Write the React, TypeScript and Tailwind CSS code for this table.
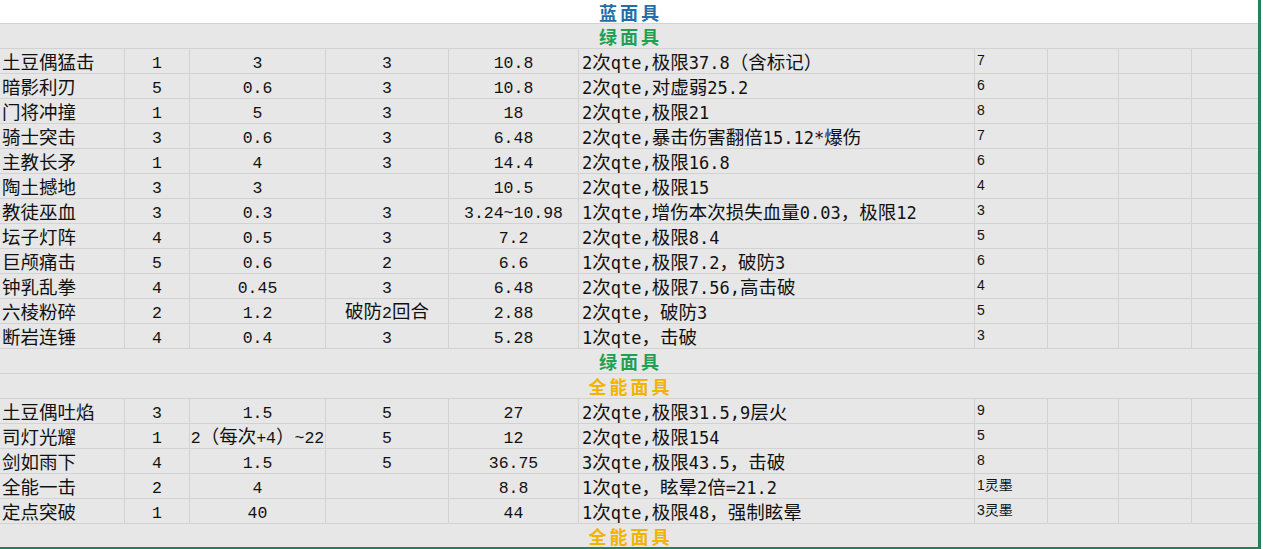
const cjk = "font-['Noto_Sans_CJK_SC',sans-serif]";
const sans = "font-['Liberation_Sans','Noto_Sans_CJK_SC',sans-serif]";

// column widths incl. right grid line
const cols = [
  "w-[125px]",
  "w-[65px]",
  "w-[136px]",
  "w-[123px]",
  "w-[130px]",
  "w-[396px]",
  "w-[73px]",
  "w-[71px]",
  "w-[73px]",
  "w-[66px]",
];

const green: string[][] = [
  ["土豆偶猛击", "1", "3", "3", "10.8", "2次qte,极限37.8（含标记）", "7"],
  ["暗影利刃", "5", "0.6", "3", "10.8", "2次qte,对虚弱25.2", "6"],
  ["门将冲撞", "1", "5", "3", "18", "2次qte,极限21", "8"],
  ["骑士突击", "3", "0.6", "3", "6.48", "2次qte,暴击伤害翻倍15.12*爆伤", "7"],
  ["主教长矛", "1", "4", "3", "14.4", "2次qte,极限16.8", "6"],
  ["陶土撼地", "3", "3", "", "10.5", "2次qte,极限15", "4"],
  ["教徒巫血", "3", "0.3", "3", "3.24~10.98", "1次qte,增伤本次损失血量0.03，极限12", "3"],
  ["坛子灯阵", "4", "0.5", "3", "7.2", "2次qte,极限8.4", "5"],
  ["巨颅痛击", "5", "0.6", "2", "6.6", "1次qte,极限7.2，破防3", "6"],
  ["钟乳乱拳", "4", "0.45", "3", "6.48", "2次qte,极限7.56,高击破", "4"],
  ["六棱粉碎", "2", "1.2", "破防2回合", "2.88", "2次qte，破防3", "5"],
  ["断岩连锤", "4", "0.4", "3", "5.28", "1次qte，击破", "3"],
];

const allRound: string[][] = [
  ["土豆偶吐焰", "3", "1.5", "5", "27", "2次qte,极限31.5,9层火", "9"],
  ["司灯光耀", "1", "2（每次+4）~22", "5", "12", "2次qte,极限154", "5"],
  ["剑如雨下", "4", "1.5", "5", "36.75", "3次qte,极限43.5，击破", "8"],
  ["全能一击", "2", "4", "", "8.8", "1次qte，眩晕2倍=21.2", "1灵墨"],
  ["定点突破", "1", "40", "", "44", "1次qte,极限48，强制眩晕", "3灵墨"],
];

// ascii runs get a half-width font like the sheet's 宋体
function Runs({ text, latin }: { text: string; latin: string }) {
  return (
    <>
      {text.split(/([\x20-\x7e]+)/).map((part, i) =>
        /^[\x20-\x7e]+$/.test(part) ? (
          <span key={i} className={latin}>
            {part}
          </span>
        ) : (
          part
        )
      )}
    </>
  );
}

const serifLatin = "font-['Liberation_Mono',monospace] text-[16.5px]";
const sansLatin = "font-['DejaVu_Sans_Mono',monospace] text-[17px]";

function Title({ text, color, last }: { text: string; color: string; last?: boolean }) {
  return (
    <div
      className={`flex items-center justify-center bg-[#e7e7e7] ${
        last ? "h-[23px]" : "h-[25px] border-b border-[#d2d2d2]"
      }`}
    >
      <span className={`text-[18px] font-bold tracking-[3px] pl-[3px] leading-none ${cjk} ${color}`}>{text}</span>
    </div>
  );
}

function Row({ cells }: { cells: string[] }) {
  return (
    <div className="flex h-[25px] bg-[#e7e7e7] border-b border-[#d2d2d2] text-[#111]">
      <div className={`${cols[0]} border-r border-[#d2d2d2] flex items-center pl-[2px] pt-[2px] text-[18.5px] whitespace-nowrap ${cjk}`}>
        {cells[0]}
      </div>
      {[1, 2, 3, 4].map((i) => (
        <div
          key={i}
          className={`${cols[i]} border-r border-[#d2d2d2] flex items-center justify-center pt-[2px] text-[18.5px] whitespace-nowrap ${cjk}`}
        >
          <span>
            <Runs text={cells[i]} latin={serifLatin} />
          </span>
        </div>
      ))}
      <div className={`${cols[5]} border-r border-[#d2d2d2] flex items-center pl-[3px] pt-[2px] text-[18.5px] whitespace-nowrap ${cjk}`}>
        <span>
          <Runs text={cells[5]} latin={sansLatin} />
        </span>
      </div>
      <div className={`${cols[6]} border-r border-[#d2d2d2] pl-[2px] pt-[3px] text-[14px] leading-[16px] ${sans}`}>
        {cells[6]}
      </div>
      <div className={`${cols[7]} border-r border-[#d2d2d2]`} />
      <div className={`${cols[8]} border-r border-[#d2d2d2]`} />
      <div className={cols[9]} />
    </div>
  );
}

export default function App() {
  return (
    <div className="w-[1263px] h-[549px] bg-white overflow-hidden">
      <div className="w-[1261px] border-r-[3px] border-b-[2px] border-[#22805a]">
        <div className="h-[24px] bg-white border-b border-[#d2d2d2] flex items-center justify-center">
          <span className={`text-[18px] font-bold tracking-[3px] pl-[3px] leading-none text-[#1f70a8] ${cjk}`}>蓝面具</span>
        </div>
        <Title text="绿面具" color="text-[#1ea052]" />
        {green.map((r) => (
          <Row key={r[0]} cells={r} />
        ))}
        <Title text="绿面具" color="text-[#1ea052]" />
        <Title text="全能面具" color="text-[#f2b200]" />
        {allRound.map((r) => (
          <Row key={r[0]} cells={r} />
        ))}
        <Title text="全能面具" color="text-[#f2b200]" last />
      </div>
    </div>
  );
}
